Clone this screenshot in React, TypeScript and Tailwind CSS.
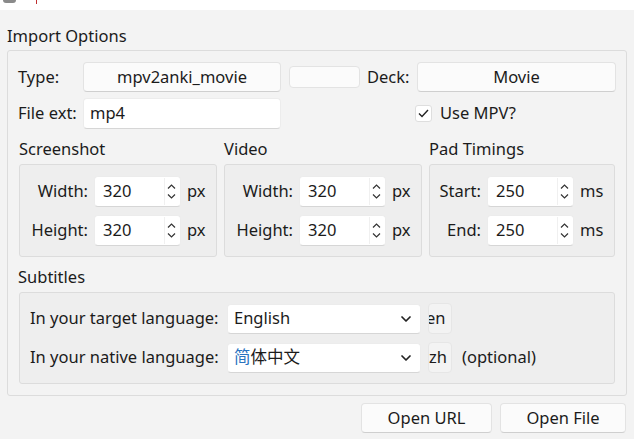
import { ChevronDown } from 'lucide-react'

const font = { fontFamily: '"Noto Sans", "Noto Sans CJK SC", sans-serif' }

function Btn({ label, className }: { label: string; className: string }) {
  return (
    <div
      className={`flex items-center justify-center rounded-[4px] border border-[#e3e3e3] border-b-[#cfcfcf] bg-[#fbfbfb] text-[16.5px] text-[#1b1b1b] ${className}`}
    >
      {label}
    </div>
  )
}

function Spin({ value }: { value: string }) {
  return (
    <div className="flex h-[31px] w-[87px] items-center rounded-[4px] border border-[#ececec] border-b-[#d6d6d6] bg-white">
      <span className="flex-1 pl-[8px] text-[16.5px] text-[#1b1b1b]">{value}</span>
      <div className="mr-[2px] flex h-[27px] w-[14px] flex-col items-center justify-center gap-[5px] border-l border-[#f0f0f0]">
        <svg width="9" height="5" viewBox="0 0 9 5" fill="none" stroke="#333" strokeWidth="1.2">
          <path d="M1 4.5 L4.5 1 L8 4.5" />
        </svg>
        <svg width="9" height="5" viewBox="0 0 9 5" fill="none" stroke="#333" strokeWidth="1.2">
          <path d="M1 0.5 L4.5 4 L8 0.5" />
        </svg>
      </div>
    </div>
  )
}

function SpinRow({ label, value, unit, labelW }: { label: string; value: string; unit: string; labelW: string }) {
  return (
    <div className="flex items-center">
      <span className={`${labelW} pr-[6px] text-right text-[16.5px]`}>{label}</span>
      <Spin value={value} />
      <span className="pl-[6px] text-[16.5px]">{unit}</span>
    </div>
  )
}

function Section({
  title,
  width,
  labelW,
  unit,
  rows,
}: {
  title: string
  width: string
  labelW: string
  unit: string
  rows: [string, string][]
}) {
  return (
    <div className={`flex flex-col ${width}`}>
      <div className="h-[25px] text-[16.5px] leading-[20px]">{title}</div>
      <div className="flex h-[93px] flex-col gap-[8px] rounded-[3px] border border-[#dcdcdc] bg-[#eeeeee] pt-[11px]">
        {rows.map(([l, v]) => (
          <SpinRow key={l} label={l} value={v} unit={unit} labelW={labelW} />
        ))}
      </div>
    </div>
  )
}

function Combo({ value, first }: { value: string; first?: string }) {
  return (
    <div className="flex h-[30px] w-[194px] items-center rounded-[4px] border border-[#ececec] border-b-[#d6d6d6] bg-white pl-[6px] pr-[6px] text-[16.5px]">
      <span className="flex-1">
        {first && <span className="text-[#2a73c0]">{first}</span>}
        {value}
      </span>
      <ChevronDown size={16} strokeWidth={2.6} color="#222" />
    </div>
  )
}

function Tag({ text, shift }: { text: string; shift: string }) {
  return (
    <div className="flex h-[31px] w-[24px] items-center overflow-hidden rounded-[4px] border border-[#e6e6e6] bg-[#f3f3f3] text-[16.5px]">
      <span className={`whitespace-nowrap ${shift}`}>{text}</span>
    </div>
  )
}

export default function App() {
  return (
    <div className="flex h-[439px] w-[634px] flex-col bg-[#f3f3f3] text-[#1b1b1b]" style={font}>
      <div className="flex h-[10px] items-start gap-[18px] bg-white pl-[3px]">
        <div className="h-[3px] w-[13px] rounded-b-full bg-[#8a8a8a]" />
        <div className="ml-[2px] h-[4px] w-[1px] bg-[#c03030]" />
      </div>
      <div className="h-[40px] pl-[7px] pt-[15px] text-[16.5px] leading-[22px]">Import Options</div>

      <div className="ml-[7px] flex h-[346px] w-[620px] flex-col rounded-[3px] border border-[#dcdcdc] pl-[10px] pt-[11px]">
        <div className="flex h-[30px] items-center">
          <span className="w-[65px] text-[16.5px]">Type:</span>
          <Btn label="mpv2anki_movie" className="h-[30px] w-[198px]" />
          <div className="ml-[8px] h-[22px] w-[71px] rounded-[4px] border border-[#e3e3e3] bg-[#fbfbfb]" />
          <span className="w-[57px] pl-[7px] text-[16.5px]">Deck:</span>
          <Btn label="Movie" className="h-[30px] w-[199px]" />
        </div>

        <div className="mt-[6px] flex h-[31px] items-center">
          <span className="w-[65px] text-[16.5px]">File ext:</span>
          <div className="flex h-[31px] w-[198px] items-center rounded-[4px] border border-[#ececec] border-b-[#d6d6d6] bg-white pl-[6px] text-[16.5px]">
            mp4
          </div>
          <div className="ml-[134px] flex h-[17px] w-[17px] items-center justify-center rounded-[3px] border border-[#dedede] bg-white">
            <svg width="11" height="9" viewBox="0 0 11 9" fill="none" stroke="#222" strokeWidth="1.4">
              <path d="M1 4.5 L4 7.5 L10 1" />
            </svg>
          </div>
          <span className="pl-[8px] text-[16.5px]">Use MPV?</span>
        </div>

        <div className="mt-[10px] flex gap-[7px] pl-[1px]">
          <Section
            title="Screenshot"
            width="w-[198px]"
            labelW="w-[74px]"
            unit="px"
            rows={[
              ['Width:', '320'],
              ['Height:', '320'],
            ]}
          />
          <Section
            title="Video"
            width="w-[198px]"
            labelW="w-[74px]"
            unit="px"
            rows={[
              ['Width:', '320'],
              ['Height:', '320'],
            ]}
          />
          <Section
            title="Pad Timings"
            width="w-[186px]"
            labelW="w-[57px]"
            unit="ms"
            rows={[
              ['Start:', '250'],
              ['End:', '250'],
            ]}
          />
        </div>

        <div className="mt-[10px] h-[25px] text-[16.5px] leading-[20px]">Subtitles</div>
        <div className="ml-[1px] flex h-[92px] w-[596px] flex-col gap-[8px] rounded-[3px] border border-[#dcdcdc] bg-[#eeeeee] pl-[10px] pt-[10px]">
          <div className="flex items-center">
            <span className="w-[197px] text-[16.5px]">In your target language:</span>
            <Combo value="English" />
            <div className="ml-[7px]">
              <Tag text="en" shift="ml-[-3px]" />
            </div>
          </div>
          <div className="flex items-center">
            <span className="w-[197px] text-[16.5px]">In your native language:</span>
            <Combo first="简" value="体中文" />
            <div className="ml-[7px]">
              <Tag text="zh" shift="ml-[0px]" />
            </div>
            <span className="pl-[10px] text-[16.5px]">(optional)</span>
          </div>
        </div>
      </div>

      <div className="mt-[7px] flex justify-end gap-[8px] pr-[8px]">
        <Btn label="Open URL" className="h-[30px] w-[131px]" />
        <Btn label="Open File" className="h-[30px] w-[126px]" />
      </div>
    </div>
  )
}
